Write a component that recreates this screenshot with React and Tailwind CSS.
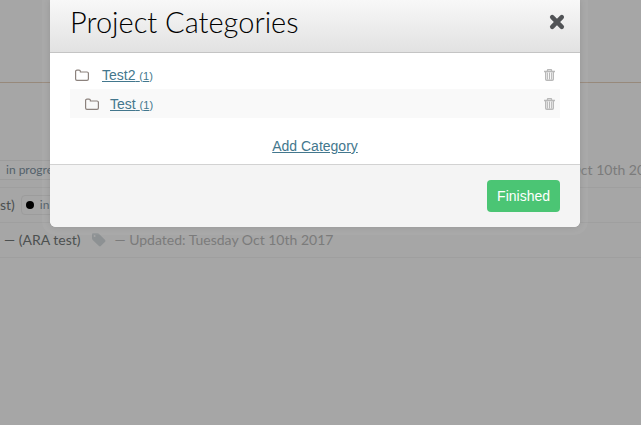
const categories = [
  { id: 1, name: "Test2", count: 1, nested: false },
  { id: 2, name: "Test", count: 1, nested: true },
];

function FolderIcon() {
  return (
    <svg
      className="h-3 w-3.5 text-[#8c827d]"
      viewBox="0 0 14 12"
      fill="none"
      stroke="currentColor"
      strokeWidth="1.200"
      aria-hidden="true"
    >
      <path d="M.6 2.500A1.400 1.400 0 0 1 2 1.100h2A1.400 1.400 0 0 1 5.400 2.500V3H12A1.400 1.400 0 0 1 13.400 4.400v5.600A1.400 1.400 0 0 1 12 11.400H2A1.400 1.400 0 0 1 .6 10z" />
    </svg>
  );
}

function TrashIcon() {
  return (
    <svg
      className="h-3 w-[11px]"
      viewBox="0 0 11 12"
      fill="none"
      stroke="currentColor"
      aria-hidden="true"
    >
      <path
        strokeWidth="1.400"
        d="M0 2.500h11M3.500 2.300V1.200Q3.500.6 4.200.6h2.600q.7 0 .7.600v1.100M1.700 2.500v7.700q0 1.100 1.100 1.100h5.400q1.100 0 1.100-1.100V2.500"
      />
      <path d="M3.600 3.500v7M5.500 3.500v7M7.400 3.500v7" />
    </svg>
  );
}

function CloseIcon() {
  return (
    <svg
      className="size-4"
      viewBox="0 0 16 16"
      stroke="currentColor"
      strokeWidth="4.500"
      strokeLinecap="round"
      aria-hidden="true"
    >
      <path d="M3.200 3.200l9.600 9.600M12.800 3.200l-9.600 9.600" />
    </svg>
  );
}

function TagIcon() {
  return (
    <svg
      className="size-3.5 shrink-0 text-[#8d9193]"
      viewBox="0 0 14 14"
      fill="currentColor"
      fillRule="evenodd"
      aria-hidden="true"
    >
      <path d="M0 1.500Q0 .3 1.200.3h4.300q.9 0 1.600.7l6 6q.9.9 0 1.800l-4.300 4.300q-.9.9-1.800 0l-6.300-6.200Q0 6.200 0 5.300zM2.600 1.900a1 1 0 1 0 0 2 1 1 0 0 0 0-2z" />
    </svg>
  );
}

function CategoryRow({ category }) {
  return (
    <li
      className={`flex h-[29px] items-center pr-[5px] text-sm ${
        category.nested ? "bg-[#f9f9f9] pl-[15px]" : "pl-[5px]"
      }`}
    >
      <FolderIcon />
      <a
        href="#category"
        className={`text-[#43778d] underline ${
          category.nested ? "ml-[11px]" : "ml-[13px]"
        }`}
      >
        {category.name} <small className="text-[11px]"> ({category.count})</small>
      </a>
      <button
        type="button"
        aria-label={`Delete ${category.name}`}
        className="ml-auto text-[#b8b8b8]"
      >
        <TrashIcon />
      </button>
    </li>
  );
}

function Updated() {
  return (
    <>
      <TagIcon />
      <span className="ml-2 text-[#7b7b7b]">
        — Updated: Tuesday Oct 10th 2017
      </span>
    </>
  );
}

function ProjectList() {
  return (
    <main className="overflow-hidden pt-[82px] font-['Lato',sans-serif] text-sm whitespace-nowrap text-[#4c5050]">
      <div className="h-[70px] border-t border-[#97897b]" />
      <div className="flex h-9 items-center border-b border-[#9f9f9f]">
        <span className="mr-[350px] flex h-5 items-center rounded-r-sm border-y border-r border-[#9c9c9c] px-1.5 text-xs text-[#53616a]">
          in progress
        </span>
        <Updated />
      </div>
      <div className="flex h-[35px] items-center border-b border-[#9f9f9f]">
        <span>st)</span>
        <span className="ml-1.5 flex h-5 items-center gap-1.5 rounded-sm border border-[#9c9c9c] px-1 text-xs text-[#53616a]">
          <span className="size-2 rounded-full bg-black" />
          in progress
        </span>
      </div>
      <div className="flex h-[35px] items-center border-b border-[#9f9f9f] pl-1">
        <span className="mr-3">— (ARA test)</span>
        <Updated />
      </div>
    </main>
  );
}

export default function App() {
  return (
    <div className="relative min-h-screen bg-[#a6a6a6]">
      <ProjectList />
      <div className="absolute inset-x-0 top-0 pr-[61px] pl-[50px] font-['Liberation_Sans',sans-serif]">
        <section
          role="dialog"
          aria-labelledby="dialog-title"
          className="overflow-hidden rounded-b-md bg-white shadow-[0_0_6px_rgba(0,0,0,0.12),0_0_0_8px_rgba(255,255,255,0.04)]"
        >
          <header className="flex h-[53px] items-center justify-between border-b border-[#c4c4c4] bg-linear-to-b from-[#f8f8f8] to-[#e2e2e2] pr-[15px] pb-2 pl-5">
            <h1
              id="dialog-title"
              className="font-['Lato',sans-serif] text-[29px] leading-8 font-light text-black"
            >
              Project Categories
            </h1>
            <button type="button" aria-label="Close" className="text-[#515356]">
              <CloseIcon />
            </button>
          </header>
          <div className="px-5 pt-[7px] pb-2">
            <ul>
              {categories.map((category) => (
                <CategoryRow key={category.id} category={category} />
              ))}
            </ul>
            <div className="mt-[18px] text-center text-sm">
              <a href="#add" className="text-[#43778d] underline">
                Add Category
              </a>
            </div>
          </div>
          <footer className="flex justify-end border-t border-[#d2d2d2] bg-[#f4f4f4] px-5 py-[15px]">
            <button
              type="button"
              className="h-8 rounded-sm bg-[#4bc574] px-2.5 text-sm text-white"
            >
              Finished
            </button>
          </footer>
        </section>
      </div>
    </div>
  );
}
